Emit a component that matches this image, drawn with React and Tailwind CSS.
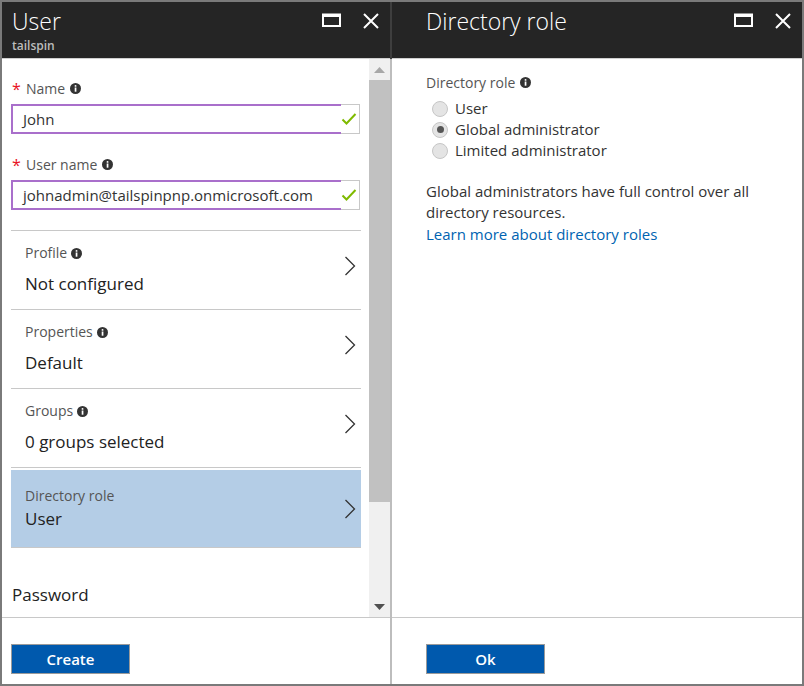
import React from "react";

const font = { fontFamily: '"Open Sans", "Noto Sans", "Liberation Sans", sans-serif' };

function Info() {
  return (
    <svg width="11" height="11" viewBox="0 0 11 11" className="inline-block">
      <circle cx="5.5" cy="5.5" r="5.5" fill="#333" />
      <rect x="4.7" y="4.5" width="1.7" height="4.2" fill="#fff" />
      <circle cx="5.55" cy="2.9" r="0.95" fill="#fff" />
    </svg>
  );
}

function Chevron() {
  return (
    <svg width="12" height="20" viewBox="0 0 12 20">
      <path d="M1.5 1 L10.5 10 L1.5 19" fill="none" stroke="#333" strokeWidth="1.3" />
    </svg>
  );
}

function Check() {
  return (
    <svg width="16" height="14" viewBox="0 0 16 14">
      <path d="M1.5 7.5 L5.5 11.5 L14.5 2" fill="none" stroke="#7fba00" strokeWidth="2" />
    </svg>
  );
}

function MaxIcon() {
  return (
    <svg width="19" height="14" viewBox="0 0 19 14">
      <rect x="1" y="1.5" width="17" height="11.5" fill="none" stroke="#fff" strokeWidth="2" />
      <rect x="1" y="1" width="17" height="3" fill="#fff" />
    </svg>
  );
}

function CloseIcon() {
  return (
    <svg width="16" height="16" viewBox="0 0 16 16">
      <path d="M1 1 L15 15 M15 1 L1 15" stroke="#fff" strokeWidth="2" />
    </svg>
  );
}

function Radio({ checked }) {
  return (
    <span className="w-[16px] h-[16px] rounded-full border border-[#c6c6c6] bg-[#e4e4e4] flex items-center justify-center">
      {checked && <span className="w-[7px] h-[7px] rounded-full bg-[#555]" />}
    </span>
  );
}

function Item({ label, value, info = true, selected = false }) {
  return (
    <div
      className={
        "flex items-center justify-between pl-[14px] pr-[5px] " +
        (selected ? "bg-[#b4cde6] h-[78px] border-b border-[#c8c8c8]" : "h-[79px] border-b border-[#c8c8c8]")
      }
    >
      <div className="flex flex-col">
        <div className={"flex items-center gap-[4px] text-[14px] text-[#555] leading-[20px] " + (selected ? "mt-0" : "-mt-[1px]")}>
          {label}
          {info && <Info />}
        </div>
        <div className={"text-[17px] text-[#222] leading-[24px] " + (selected ? "mt-[1px]" : "mt-[9px]")}>{value}</div>
      </div>
      <div className={selected ? "" : "-mt-[8px]"}>
        <Chevron />
      </div>
    </div>
  );
}

function Field({ label, value }) {
  return (
    <div>
      <div className="flex items-center h-[20px] text-[14px] text-[#555]">
        <span className="text-[#e81123] text-[16px] w-[15px] pl-[1px] leading-none mt-[2px]">*</span>
        <span className="mr-[5px]">{label}</span>
        <Info />
      </div>
      <div className="mt-[6px] flex h-[30px] w-[349px]">
        <div className="flex-1 border-2 border-r-0 border-[#a96fcb] flex items-center pl-[10px] text-[15px] text-[#333]">
          {value}
        </div>
        <div className="w-[19px] border border-l-0 border-[#c8c8c8] flex items-center justify-start">
          <Check />
        </div>
      </div>
    </div>
  );
}

export default function App() {
  return (
    <div style={font} className="w-[804px] h-[686px] bg-[#7a7a7a] p-[2px] pb-[2px] flex overflow-hidden">
      {/* Left panel */}
      <div className="w-[388px] h-full flex flex-col bg-white">
        <div className="h-[56px] bg-[#252525] flex justify-between pl-[10px] pr-[11px] border-b border-[#cfcfcf] box-content">
          <div className="flex flex-col">
            <div className="text-[23px] text-white leading-[30px] mt-[4px] font-light">User</div>
            <div className="text-[12px] font-semibold text-[#bdbdbd] leading-[14px] mt-[3px]">tailspin</div>
          </div>
          <div className="flex items-start gap-[22px] pt-[11px]">
            <MaxIcon />
            <CloseIcon />
          </div>
        </div>
        <div className="flex-1 flex min-h-0">
          <div className="flex-1 overflow-hidden pl-[9px] pr-[8px]">
            <div className="mt-[19px]">
              <Field label="Name" value="John" />
            </div>
            <div className="mt-[20px]">
              <Field label="User name" value="johnadmin@tailspinpnp.onmicrosoft.com" />
            </div>
            <div className="mt-[20px] border-t border-[#c8c8c8]">
              <Item label="Profile" value="Not configured" />
              <Item label="Properties" value="Default" />
              <Item label="Groups" value="0 groups selected" />
              <div className="h-[2px]" />
              <Item label="Directory role" value="User" info={false} selected />
            </div>
            <div className="mt-[35px] -ml-[9px] pl-[10px] text-[17px] text-[#222] leading-[24px]">Password</div>
          </div>
          <div className="w-[21px] bg-[#f0f0f0] flex flex-col items-center">
            <div className="h-[21px] flex items-center justify-center">
              <svg width="11" height="6" viewBox="0 0 11 6"><path d="M0 6 L5.5 0 L11 6 Z" fill="#a8a8a8" /></svg>
            </div>
            <div className="w-[21px] h-[422px] bg-[#c1c1c1]" />
            <div className="flex-1" />
            <div className="h-[20px] flex items-center justify-center">
              <svg width="11" height="6" viewBox="0 0 11 6"><path d="M0 0 L11 0 L5.5 6 Z" fill="#505050" /></svg>
            </div>
          </div>
        </div>
        <div className="h-[67px] border-t border-[#c8c8c8] pl-[9px] pt-[26px]">
          <button className="w-[119px] h-[30px] bg-[#0059ad] border border-[#9a9a9a] text-white text-[15px] font-semibold flex items-center justify-center">
            Create
          </button>
        </div>
      </div>
      {/* Divider */}
      <div className="w-[2px] h-full flex flex-col">
        <div className="h-[57px] bg-[#3e3e3e]" />
        <div className="flex-1 bg-[#bdbdbd]" />
      </div>
      {/* Right panel */}
      <div className="flex-1 h-full flex flex-col bg-white">
        <div className="h-[56px] bg-[#252525] flex justify-between pl-[34px] pr-[11px] border-b border-[#cfcfcf] box-content">
          <div className="text-[23px] text-white leading-[30px] mt-[4px] font-light">Directory role</div>
          <div className="flex items-start gap-[22px] pt-[11px]">
            <MaxIcon />
            <CloseIcon />
          </div>
        </div>
        <div className="flex-1 pl-[34px]">
          <div className="mt-[13px] flex items-center gap-[5px] text-[14px] text-[#555] h-[20px]">
            Directory role <Info />
          </div>
          <div className="mt-[6px] pl-[6px] flex flex-col">
            {[
              ["User", false],
              ["Global administrator", true],
              ["Limited administrator", false],
            ].map(([t, c]) => (
              <div key={t} className="flex items-center gap-[7px] h-[21px] text-[15px] text-[#333]">
                <Radio checked={c} />
                {t}
              </div>
            ))}
          </div>
          <div className="mt-[20px] text-[15px] text-[#333] leading-[21px] w-[360px]">
            Global administrators have full control over all directory resources.
          </div>
          <div className="text-[15px] text-[#0063b1] leading-[22px]">Learn more about directory roles</div>
        </div>
        <div className="h-[67px] border-t border-[#c8c8c8] pl-[34px] pt-[26px]">
          <button className="w-[119px] h-[30px] bg-[#0059ad] border border-[#9a9a9a] text-white text-[15px] font-semibold flex items-center justify-center">
            Ok
          </button>
        </div>
      </div>
    </div>
  );
}
